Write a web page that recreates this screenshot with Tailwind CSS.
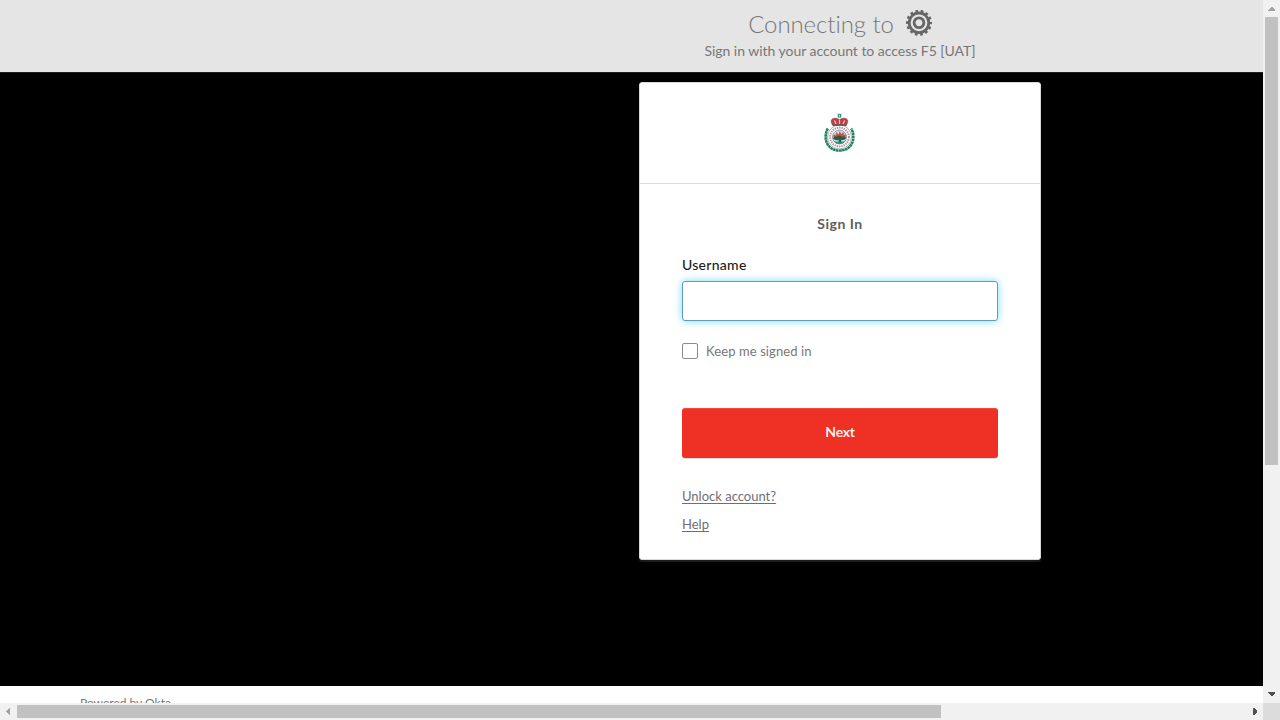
<!DOCTYPE html>
<html lang="en">
<head>
<meta charset="utf-8">
<title>Sign In</title>
<script src="https://cdn.jsdelivr.net/npm/@tailwindcss/browser@4"></script>
</head>
<body class="h-[720px] w-[1280px] overflow-hidden bg-white font-['Lato',sans-serif]">
<div class="grid h-[720px] grid-cols-[1263px_17px] grid-rows-[703px_17px]">
  <div class="overflow-hidden">
    <div class="flex h-[720px] w-[1680px] flex-col">
      <header class="flex h-[73px] shrink-0 flex-col items-center border-b border-[#1b1d1f] bg-[#e5e5e5] pt-[7px] text-[#777]">
        <div class="flex h-[32px] items-center gap-[11px]">
          <h1 class="pt-[2px] text-[24px] leading-[32px] font-light tracking-[-0.08px] whitespace-nowrap"><span>Connecting to</span></h1>
          <svg class="size-[27px]" viewBox="-14 -12.800 27 27" fill="none" stroke="#666">
            <circle r="9.8" stroke-width="2.8"/>
            <circle r="11.8" stroke-width="2.400" stroke-dasharray="2.700 2.596" stroke-dashoffset="1.350"/>
            <circle r="4.900" stroke-width="2.800"/>
          </svg>
        </div>
        <p class="mt-[2px] text-[14px] leading-[20px] tracking-[-0.03px] whitespace-nowrap"><span>Sign in with your account to access F5 [UAT]</span></p>
      </header>
      <main class="flex h-[613px] shrink-0 justify-center bg-black pt-[9px]">
        <section class="h-[478px] w-[402px] rounded-[3px] border border-[#d8dad9] bg-white shadow-[0_2px_0_#1a1d1b]">
          <div class="flex h-[101px] justify-center border-b border-[#ddd] pt-[30px]">
            <svg class="h-[40px] w-[34px]" viewBox="0 0 34 40" fill="none">
              <path d="M4.800 15.500C0 24 3 37.500 16.500 37.500S33 24 28.200 15.500" stroke="#247f61" stroke-width="2.600" stroke-dasharray="2.600 .4"/>
              <circle cx="16.500" cy="24" r="12" fill="#fff" stroke="#8fb3a5" stroke-width=".9"/>
              <circle cx="16.500" cy="24" r="9.400" stroke="#b08791" stroke-width="2" stroke-dasharray="1.300 1"/>
              <circle cx="16.500" cy="24" r="7" fill="#c9e0ee" stroke="#678" stroke-width=".7"/>
              <path d="M10.500 25v-4l2 1.500 1-3.500 2 2.500 1.200-3.500 1.600 3 2-2 .7 3 1.800-1V25z" fill="#d4503c"/>
              <path d="M10 25.500q1.500-3 4-2 2-2 4.500 0 3-1 4.500 2-2 2-5 1.500l1 3h-4l1-3q-4 1-6-1.500z" fill="#2f5a41"/>
              <path d="M11 28q5.500 2 11 0-1 3-5.500 3T11 28z" fill="#1f9470"/>
              <path d="M10 12.500C6.500 8 8.500 4.800 13 5.300l3.500 1.200L20 5.300c4.500-.5 6.500 2.700 3 7.200z" fill="#c63a47" stroke="#854850" stroke-width=".7"/>
              <path d="M11.500 7.500 13 11M21.500 7.500 20 11M16.500 6.500v5" stroke="#e9c9cb" stroke-width="1.200"/>
              <path d="M9.500 12.400q7-1.400 14 0" stroke="#5b5d5b" stroke-width="1.200"/>
              <path d="M14.700.8h3.600v3.800h-3.600z" fill="#3b9478"/>
              <path d="M16 2h1v1.500h-1z" fill="#d9eee6"/>
            </svg>
          </div>
          <form class="flex flex-col px-[42px]" onsubmit="return false">
            <h2 class="mt-[30px] text-center text-[14px] leading-[20px] font-bold tracking-[0.5px] text-[#5e5e5e]"><span>Sign In</span></h2>
            <label for="user" class="mt-[21px] text-[14px] leading-[20px] font-medium tracking-[0.27px] text-[#1d1d21]"><span>Username</span></label>
            <input id="user" class="mt-[6px] h-[40px] rounded-[3px] border border-[#5c9dbd] bg-white shadow-[0_0_8px_#7bdcf5] outline-none">
            <div class="mt-[21px] flex h-[18px] items-center gap-[8px] text-[13px] leading-[18px] tracking-[0.1px] text-[#777]">
              <i class="block size-[16px] rounded-[2px] border border-[#8c8c8c]"></i><span>Keep me signed in</span>
            </div>
            <button class="mt-[48px] h-[50px] rounded-[3px] border-t border-[#f5493c] bg-[#ef3125] pb-[3px] text-[14px] leading-[20px] font-bold tracking-[-0.3px] text-white/95 shadow-[0_1px_0_#d8d8d8]"><span>Next</span></button>
            <a class="mt-[29px] text-[13px] leading-[18px] text-[#6e6e78] underline underline-offset-2"><span>Unlock account?</span></a>
            <a class="mt-[10px] text-[13px] leading-[18px] text-[#6e6e78] underline underline-offset-2"><span>Help</span></a>
          </form>
        </section>
      </main>
      <footer class="pt-[8px] pl-[80px] text-[12px] leading-[18px] text-[#777]"><span>Powered by Okta</span></footer>
    </div>
  </div>
  <div class="flex flex-col items-center bg-[#f1f1f1]">
    <svg class="h-[17px] w-[17px] shrink-0" viewBox="0 0 17 17" shape-rendering="crispEdges"><path d="M5 11V10L8 7h1l3 3v1z" fill="#a3a3a3"/></svg>
    <div class="h-[448px] w-[13px] bg-[#c1c1c1]"></div>
    <svg class="mt-auto h-[17px] w-[17px] shrink-0" viewBox="0 0 17 17" shape-rendering="crispEdges"><path d="M5 6v1l3 3h1l3-3V6z" fill="#505050"/></svg>
  </div>
  <div class="flex items-center bg-[#f1f1f1]">
    <svg class="h-[17px] w-[17px] shrink-0" viewBox="0 0 17 17" shape-rendering="crispEdges"><path d="M10 5H9L6 8v1l3 3h1z" fill="#a3a3a3"/></svg>
    <div class="h-[13px] w-[924px] bg-[#c1c1c1]"></div>
    <svg class="ml-auto h-[17px] w-[17px] shrink-0" viewBox="0 0 17 17" shape-rendering="crispEdges"><path d="M7 5h1l3 3v1l-3 3H7z" fill="#505050"/></svg>
  </div>
  <div class="bg-[#dcdcdc]"></div>
</div>
</body>
</html>
